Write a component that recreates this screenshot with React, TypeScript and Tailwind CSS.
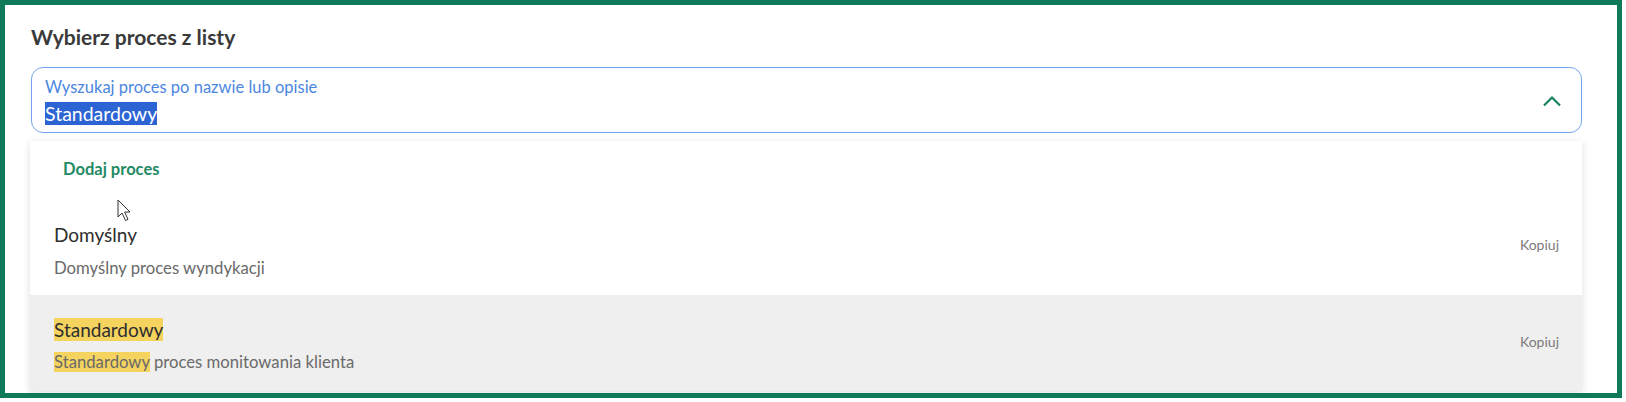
export default function App() {
    return (
        <div className="w-[1626px] h-[402px] bg-white pr-[4px] pb-[4px] font-['Lato','Liberation_Sans',sans-serif]">
            <div className="relative h-full overflow-hidden border-[5px] border-[#0e7a5a] bg-white pl-[26px] pr-[35px] pt-[20px]">
                <h2 className="text-[21px] leading-[24px] font-bold text-[#3a3a3a]">Wybierz proces z listy</h2>

                <div className="mt-[18px] flex h-[66px] items-center justify-between rounded-[12px] border-[1.5px] border-[#74a3ea] pl-[13px] pr-[19px]">
                    <div className="flex flex-col pt-[1px]">
                        <span className="text-[16.5px] leading-[20px] text-[#4b87e0]">Wyszukaj proces po nazwie lub opisie</span>
                        <span className="mt-[6px] text-[19.5px] leading-[22px] text-[#333]">
                            <span className="bg-[#2c64d4] text-white">Standardowy</span>
                        </span>
                    </div>
                    <svg width="20" height="12" viewBox="0 0 20 12" className="mt-[2px]">
                        <polyline points="2,10.5 10,2.5 18,10.5" fill="none" stroke="#17805e" strokeWidth="2.2" />
                    </svg>
                </div>

                <div className="mt-[8px] -ml-[1px] bg-white shadow-[0_2px_8px_rgba(0,0,0,0.13)]">
                    <div className="pl-[33px] pt-[18px] pb-[20px] text-[16.5px] leading-[20px] font-bold text-[#1f8a63]">Dodaj proces</div>

                    <div className="flex h-[96px] justify-between pl-[24px] pr-[23px] pt-[24px]">
                        <div className="flex flex-col">
                            <span className="text-[19px] leading-[24px] text-[#2e2e2e]">Domyślny</span>
                            <span className="mt-[11px] text-[16.7px] leading-[20px] text-[#6a6a6a]">Domyślny proces wyndykacji</span>
                        </div>
                        <span className="mt-[14px] text-[14px] leading-[16px] text-[#7a7a7a]">Kopiuj</span>
                    </div>

                    <div className="flex h-[96px] justify-between bg-[#efefef] pl-[24px] pr-[23px] pt-[23px]">
                        <div className="flex flex-col">
                            <span className="text-[19px] leading-[24px] text-[#2e2e2e]">
                                <span className="bg-[#f4d35e]">Standardowy</span>
                            </span>
                            <span className="mt-[10px] text-[16.7px] leading-[20px] text-[#6a6a6a]">
                                <span className="bg-[#f4d35e]">Standardowy</span> proces monitowania klienta
                            </span>
                        </div>
                        <span className="mt-[16px] text-[14px] leading-[16px] text-[#7a7a7a]">Kopiuj</span>
                    </div>
                </div>

                <svg width="16" height="24" viewBox="0 0 16 24" className="absolute left-[112px] top-[194px]">
                    <path d="M1 1 L1 18 L5 14 L8.5 21.5 L11 20.3 L7.6 13 L13 13 Z" fill="white" stroke="#333" strokeWidth="1" strokeLinejoin="round" />
                </svg>
            </div>
        </div>
    );
}
